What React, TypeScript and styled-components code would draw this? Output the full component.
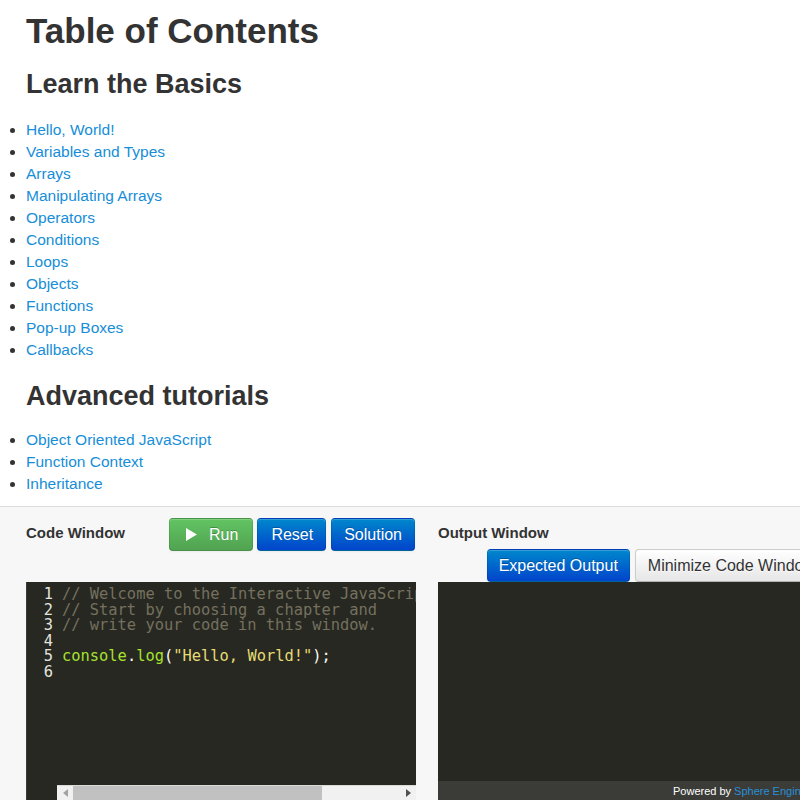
import React from "react";
import styled, { createGlobalStyle } from "styled-components";

const GlobalStyle = createGlobalStyle`
  html, body {
    margin: 0;
    padding: 0;
    overflow: hidden;
    background: #ffffff;
  }
  body {
    font-family: "Liberation Sans", Arial, sans-serif;
    color: #333333;
  }
`;

const Page = styled.div`
  width: 800px;
  height: 800px;
  overflow: hidden;
  display: flex;
  flex-direction: column;
`;

const Content = styled.div`
  padding: 0 0 11px 0;
`;

const Title = styled.h1`
  margin: 11px 0 0 26px;
  font-size: 35px;
  line-height: 40px;
  font-weight: bold;
  color: #333333;
`;

const SectionTitle = styled.h2<{ $top: number }>`
  margin: ${(p) => p.$top}px 0 0 26px;
  font-size: 27px;
  line-height: 32px;
  font-weight: bold;
  color: #333333;
`;

const TocList = styled.ul<{ $top: number }>`
  margin: ${(p) => p.$top}px 0 0 0;
  padding: 0 0 0 26px;
  list-style: disc;
  font-size: 15.5px;
  line-height: 22px;
  color: #333333;
`;

const TocItem = styled.li`
  a {
    color: #168ed8;
    text-decoration: none;
  }
`;

const Workbench = styled.div`
  flex: 1;
  width: 860px;
  border-top: 1px solid #dcdcdc;
  background: #f7f7f7;
  display: flex;
  gap: 22px;
  padding: 11px 0 0 26px;
`;

const Column = styled.div`
  width: 390px;
  display: flex;
  flex-direction: column;
`;

const CodeHeader = styled.div`
  display: flex;
  align-items: flex-start;
  justify-content: space-between;
  height: 33px;
  margin-bottom: 31px;
`;

const PanelTitle = styled.div`
  font-size: 15px;
  font-weight: bold;
  color: #333333;
  line-height: 30px;
`;

const ButtonGroup = styled.div`
  display: flex;
  gap: 4px;
  margin-right: 1px;
`;

const OutputButtons = styled.div`
  display: flex;
  justify-content: flex-end;
  gap: 5px;
  margin-top: 1px;
`;

type Variant = "success" | "primary" | "default";

const Button = styled.button<{ $variant: Variant }>`
  display: inline-flex;
  align-items: center;
  gap: 12px;
  height: 33px;
  padding: 0 12px;
  font-family: "Liberation Sans", Arial, sans-serif;
  font-size: 16px;
  border-radius: 4px;
  border: 1px solid;
  cursor: pointer;
  white-space: nowrap;
  color: ${(p) => (p.$variant === "default" ? "#333333" : "#ffffff")};
  text-shadow: ${(p) =>
    p.$variant === "default"
      ? "0 1px 1px rgba(255,255,255,0.75)"
      : "0 -1px 0 rgba(0,0,0,0.25)"};
  border-color: ${(p) =>
    p.$variant === "default"
      ? "#cccccc #cccccc #b3b3b3"
      : "rgba(0,0,0,0.1) rgba(0,0,0,0.1) rgba(0,0,0,0.25)"};
  background: ${(p) =>
    p.$variant === "success"
      ? "linear-gradient(to bottom, #62c462, #51a351)"
      : p.$variant === "primary"
      ? "linear-gradient(to bottom, #0088cc, #0044cc)"
      : "linear-gradient(to bottom, #ffffff, #e6e6e6)"};
  box-shadow: inset 0 1px 0 rgba(255, 255, 255, 0.2),
    0 1px 2px rgba(0, 0, 0, 0.05);
`;

const RunButton = styled(Button)`
  padding: 0 14px 0 16px;
`;

const ResetButton = styled(Button)`
  padding: 0 12px 0 13px;
  margin-right: 1px;
`;

const WideButton = styled(Button)`
  padding: 0 11px;
`;

const Editor = styled.div`
  height: 218px;
  display: flex;
  background: #272822;
  overflow: hidden;
  font-family: "DejaVu Sans Mono", "Liberation Mono", monospace;
  font-size: 15.4px;
  line-height: 15.5px;
`;

const Gutter = styled.div`
  width: 31px;
  flex: none;
  padding: 5px 4px 0 0;
  box-sizing: border-box;
  text-align: right;
  color: #e4e4df;
  border-left: 1px solid #3a3b35;
`;

const CodeArea = styled.div`
  flex: 1;
  min-width: 0;
  display: flex;
  flex-direction: column;
`;

const Lines = styled.div`
  flex: 1;
  overflow: hidden;
  padding: 5px 0 0 5px;
  white-space: pre;
  color: #f8f8f2;
`;

const Line = styled.div`
  height: 15.5px;
`;

const Tok = styled.span<{ $c: string }>`
  color: ${(p) => p.$c};
`;

const HScroll = styled.div`
  height: 14px;
  flex: none;
  display: flex;
  align-items: stretch;
  background: #f1f1f1;
  border-top: 1px solid #dadada;
`;

const ScrollArrow = styled.div`
  width: 16px;
  display: flex;
  align-items: center;
  justify-content: center;
`;

const ScrollTrack = styled.div`
  flex: 1;
  display: flex;
  align-items: center;
`;

const ScrollThumb = styled.div`
  height: 100%;
  background: #c1c1c1;
`;

const Output = styled.div`
  height: 218px;
  display: flex;
  flex-direction: column;
  background: #272822;
`;

const OutputBody = styled.div`
  flex: 1;
`;

const OutputFooter = styled.div`
  height: 19px;
  background: #3b3c37;
  display: flex;
  align-items: center;
  padding-left: 235px;
  font-size: 11px;
  color: #ffffff;
  white-space: nowrap;
  a {
    color: #2a8fd6;
    text-decoration: none;
    margin-left: 3px;
  }
`;

const basics = [
  "Hello, World!",
  "Variables and Types",
  "Arrays",
  "Manipulating Arrays",
  "Operators",
  "Conditions",
  "Loops",
  "Objects",
  "Functions",
  "Pop-up Boxes",
  "Callbacks",
];

const advanced = ["Object Oriented JavaScript", "Function Context", "Inheritance"];

const COMMENT = "#75715e";
const FUNC = "#a6e22e";
const STR = "#e6db74";
const PLAIN = "#f8f8f2";

const PlayIcon = () => (
  <svg width="11" height="13" viewBox="0 0 11 13">
    <path d="M0 0 L11 6.5 L0 13 Z" fill="#ffffff" />
  </svg>
);

const ArrowLeft = () => (
  <svg width="5" height="8" viewBox="0 0 5 8">
    <path d="M5 0 L0 4 L5 8 Z" fill="#a3a3a3" />
  </svg>
);

const ArrowRight = () => (
  <svg width="5" height="8" viewBox="0 0 5 8">
    <path d="M0 0 L5 4 L0 8 Z" fill="#505050" />
  </svg>
);

export default function App() {
  return (
    <Page>
      <GlobalStyle />
      <Content>
        <Title>Table of Contents</Title>
        <SectionTitle $top={17}>Learn the Basics</SectionTitle>
        <TocList $top={19}>
          {basics.map((b) => (
            <TocItem key={b}>
              <a href="#">{b}</a>
            </TocItem>
          ))}
        </TocList>
        <SectionTitle $top={19}>Advanced tutorials</SectionTitle>
        <TocList $top={17}>
          {advanced.map((b) => (
            <TocItem key={b}>
              <a href="#">{b}</a>
            </TocItem>
          ))}
        </TocList>
      </Content>
      <Workbench>
        <Column>
          <CodeHeader>
            <PanelTitle>Code Window</PanelTitle>
            <ButtonGroup>
              <RunButton $variant="success">
                <PlayIcon />
                Run
              </RunButton>
              <ResetButton $variant="primary">Reset</ResetButton>
              <Button $variant="primary">Solution</Button>
            </ButtonGroup>
          </CodeHeader>
          <Editor>
            <Gutter>
              {[1, 2, 3, 4, 5, 6].map((n) => (
                <Line key={n}>{n}</Line>
              ))}
            </Gutter>
            <CodeArea>
              <Lines>
                <Line>
                  <Tok $c={COMMENT}>// Welcome to the Interactive JavaScript tutorial.</Tok>
                </Line>
                <Line>
                  <Tok $c={COMMENT}>// Start by choosing a chapter and</Tok>
                </Line>
                <Line>
                  <Tok $c={COMMENT}>// write your code in this window.</Tok>
                </Line>
                <Line> </Line>
                <Line>
                  <Tok $c={FUNC}>console</Tok>
                  <Tok $c={PLAIN}>.</Tok>
                  <Tok $c={FUNC}>log</Tok>
                  <Tok $c={PLAIN}>(</Tok>
                  <Tok $c={STR}>"Hello, World!"</Tok>
                  <Tok $c={PLAIN}>);</Tok>
                </Line>
                <Line> </Line>
              </Lines>
              <HScroll>
                <ScrollArrow>
                  <ArrowLeft />
                </ScrollArrow>
                <ScrollTrack>
                  <ScrollThumb style={{ width: "76%" }} />
                </ScrollTrack>
                <ScrollArrow>
                  <ArrowRight />
                </ScrollArrow>
              </HScroll>
            </CodeArea>
          </Editor>
        </Column>
        <Column>
          <PanelTitle>Output Window</PanelTitle>
          <OutputButtons>
            <WideButton $variant="primary">Expected Output</WideButton>
            <Button $variant="default">Minimize Code Window</Button>
          </OutputButtons>
          <Output>
            <OutputBody />
            <OutputFooter>
              Powered by<a href="#">Sphere Engine</a>
            </OutputFooter>
          </Output>
        </Column>
      </Workbench>
    </Page>
  );
}
